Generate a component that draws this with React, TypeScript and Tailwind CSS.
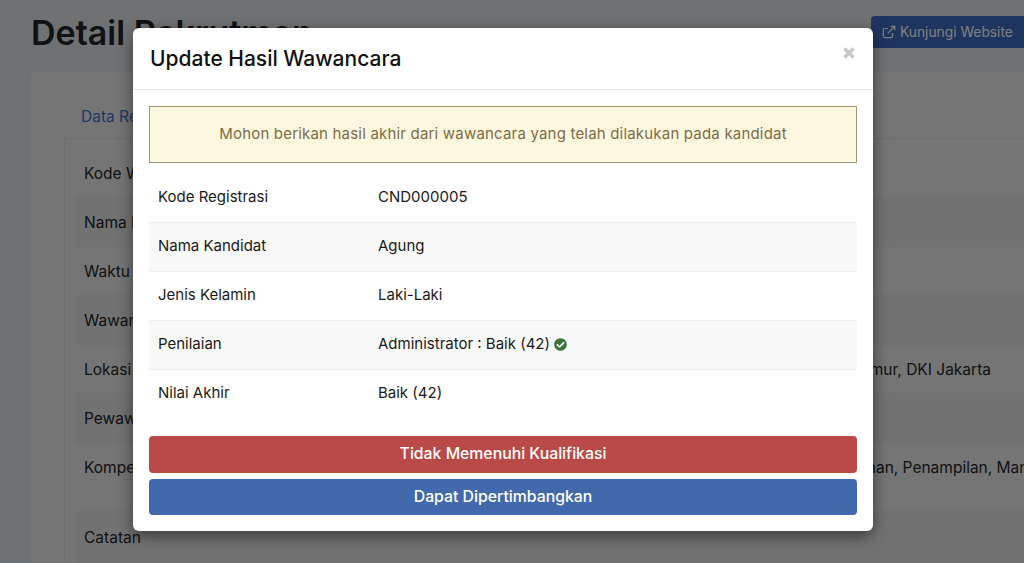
import { FaCheckCircle } from "react-icons/fa"

const font = "font-['Inter','Liberation_Sans',sans-serif]"

const bgRows = [
  { label: "Kode Wawancara", value: "", striped: false },
  { label: "Nama Posisi", value: "", striped: true },
  { label: "Waktu Wawancara", value: "", striped: false },
  { label: "Wawancara", value: "", striped: true },
  { label: "Lokasi", value: "Jakarta Timur, DKI Jakarta", striped: false },
  { label: "Pewawancara", value: "", striped: true },
]

const rows = [
  { label: "Kode Registrasi", value: "CND000005" },
  { label: "Nama Kandidat", value: "Agung" },
  { label: "Jenis Kelamin", value: "Laki-Laki" },
  { label: "Penilaian", value: "Administrator : Baik (42)", check: true },
  { label: "Nilai Akhir", value: "Baik (42)" },
]

const ExternalIcon = () => (
  <svg viewBox="0 0 16 16" className="h-[14px] w-[14px] fill-none stroke-current" strokeWidth="1.4">
    <path d="M12 9v3.5a2 2 0 0 1-2 2H3.5a2 2 0 0 1-2-2V6a2 2 0 0 1 2-2H7" />
    <path d="M6.5 9.5 14 2M10 1.5h4.5V6" />
  </svg>
)

const CloseIcon = () => (
  <svg viewBox="0 0 12 12" className="mt-[19px] h-3 w-3 fill-none stroke-[#c8c8c8]" strokeWidth="3.4">
    <path d="M1.5 1.5 10.5 10.5M10.5 1.5 1.5 10.5" />
  </svg>
)

const App = () => {
  return (
    <div className={`relative h-[563px] w-[1024px] overflow-hidden bg-[#dee2e6] ${font}`}>
      <div className="flex h-[72px] items-start justify-between pl-[31px]">
        <h1 className="mt-[11px] text-[34px] font-semibold leading-[44px] text-[#212529]">Detail Rekrutmen</h1>
        <button className="mt-4 flex h-8 w-[153px] items-center gap-[4px] rounded-l bg-[#3c6ac0] pl-[11px] text-[13.8px] text-white">
          <ExternalIcon />
          Kunjungi Website
        </button>
      </div>

      <div className="ml-[31px] h-[491px] rounded-tl bg-[#ebebeb] pl-[33px] pt-[34px]">
        <div className="pl-[17px] pt-px text-[15.5px] leading-5 text-[#3a6fc4]">Data Rekrutmen</div>
        <div className="mt-[11px] border-l border-t border-[#dcdcdc] pl-[11px] pt-[10px] text-[15.5px] text-[#212529]">
          {bgRows.map((row) => (
            <div
              key={row.label}
              className={`flex h-[49px] items-center justify-between border-b border-[#e2e2e2] pl-2 pr-[33px] pt-px ${row.striped ? "bg-[#e5e5e5]" : ""}`}
            >
              <span>{row.label}</span>
              <span>{row.value}</span>
            </div>
          ))}
          <div className="flex h-[69px] items-start overflow-hidden whitespace-nowrap border-b border-[#e2e2e2] pl-2 pt-[13px]">
            <span>Kompetensi</span>
            <span className="ml-[615px]">Kepemimpinan, Penampilan, Manajemen</span>
          </div>
          <div className="flex h-[60px] items-start bg-[#e5e5e5] pl-2 pt-[14px]">Catatan</div>
        </div>
      </div>

      <div className="absolute inset-0 bg-black/50" />

      <div className="absolute left-[133px] top-[28px] w-[740px] rounded-md bg-white shadow-[0_5px_15px_rgba(0,0,0,0.5)]">
        <div className="flex h-[62px] items-start justify-between border-b border-[#e5e5e5] pl-[17px] pr-[18px]">
          <h4 className="mt-[18px] text-[21px] font-medium leading-[26px] text-[#111]">Update Hasil Wawancara</h4>
          <CloseIcon />
        </div>
        <div className="px-4 pb-4 pt-4">
          <div className="flex h-[57px] items-center justify-center border border-[#a3946f] bg-[#fcf8e0] text-[15px] tracking-[0.19px] text-[#806c45]">
            Mohon berikan hasil akhir dari wawancara yang telah dilakukan pada kandidat
          </div>
          <div className="mt-[10px] text-[15px] text-[#1a1a1a]">
            {rows.map((row, i) => (
              <div
                key={row.label}
                className={`flex h-[49px] items-center pb-px pl-[9px] pr-2 ${i > 0 ? "border-t border-[#eeeeee]" : ""} ${i % 2 === 1 ? "bg-[#f9f9f9]" : ""}`}
              >
                <span className="w-[220px]">{row.label}</span>
                <span className="flex items-center gap-[4px]">
                  {row.value}
                  {row.check && <FaCheckCircle className="h-[13px] w-[13px] text-[#3c763d]" />}
                </span>
              </div>
            ))}
          </div>
          <div className="mt-[18px] flex flex-col gap-[6px] text-[15.8px] font-medium text-white">
            <button className="h-[37px] rounded bg-[#b94a48] pb-px">Tidak Memenuhi Kualifikasi</button>
            <button className="h-[36px] rounded bg-[#4269ac] pb-px">Dapat Dipertimbangkan</button>
          </div>
        </div>
      </div>
    </div>
  )
}

export default App
